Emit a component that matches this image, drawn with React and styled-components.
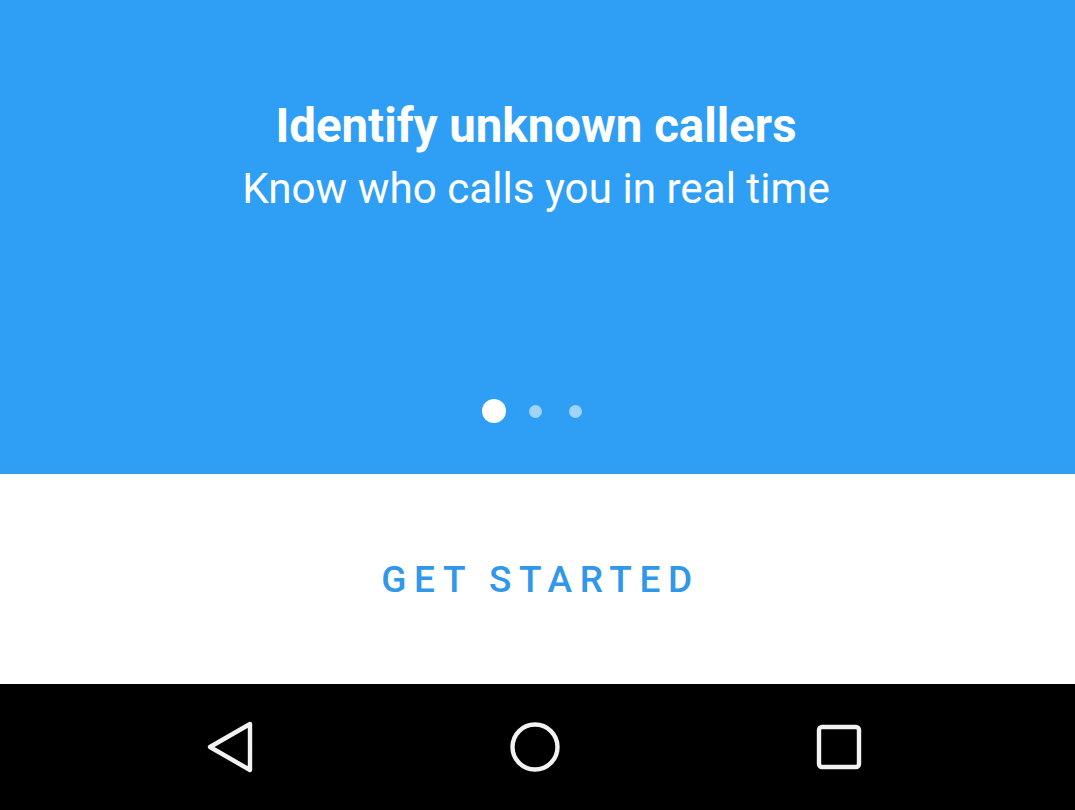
import React from "react";
import styled, { createGlobalStyle } from "styled-components";

const GlobalStyle = createGlobalStyle`
  html, body {
    margin: 0;
    padding: 0;
    background: #000;
  }
  body {
    font-family: Roboto, "Noto Sans", sans-serif;
    -webkit-font-smoothing: antialiased;
  }
`;

const SLIDES = 3;

const App = () => {
  const active = 0;

  return (
    <>
      <GlobalStyle />
      <Screen>
        <Hero>
          <Copy>
            <Title>Identify unknown callers</Title>
            <Subtitle>Know who calls you in real time</Subtitle>
          </Copy>
          <Dots>
            {Array.from({ length: SLIDES }).map((_, i) => (
              <Dot key={i} $active={i === active} />
            ))}
          </Dots>
        </Hero>

        <Footer>
          <StartButton>GET STARTED</StartButton>
        </Footer>

        <NavBar>
          <NavButton aria-label="Back">
            <svg width="52" height="56" viewBox="0 0 52 56">
              <path
                d="M45 5 L5 28 L45 51 Z"
                fill="none"
                stroke="#f2f2f2"
                strokeWidth="4.4"
                strokeLinejoin="round"
              />
            </svg>
          </NavButton>
          <NavButton aria-label="Home">
            <svg width="52" height="52" viewBox="0 0 52 52">
              <circle cx="26" cy="26" r="22.5" fill="none" stroke="#f2f2f2" strokeWidth="4.4" />
            </svg>
          </NavButton>
          <NavButton aria-label="Recents">
            <svg width="48" height="48" viewBox="0 0 48 48">
              <rect x="4" y="4" width="40" height="40" rx="3" fill="none" stroke="#f2f2f2" strokeWidth="4.4" />
            </svg>
          </NavButton>
        </NavBar>
      </Screen>
    </>
  );
};

// ── Styled ──

const Screen = styled.div`
  width: 1075px;
  height: 810px;
  display: flex;
  flex-direction: column;
  overflow: hidden;
`;

const Hero = styled.section`
  height: 474px;
  background: #2f9ff5;
  display: flex;
  flex-direction: column;
  align-items: center;
  box-sizing: border-box;
  padding-top: 98px;
`;

const Copy = styled.div`
  display: flex;
  flex-direction: column;
  align-items: center;
  color: #fff;
  margin-right: 3px;
`;

const Title = styled.h1`
  margin: 0;
  font-size: 47.4px;
  font-weight: 700;
  line-height: 56px;
  letter-spacing: 0;
`;

const Subtitle = styled.p`
  margin: 9px 0 0;
  font-size: 42.2px;
  font-weight: 400;
  line-height: 52px;
`;

const Dots = styled.div`
  margin-top: 184px;
  display: flex;
  align-items: center;
  padding-right: 8px;
`;

const Dot = styled.span`
  width: ${(p) => (p.$active ? "24px" : "13px")};
  height: ${(p) => (p.$active ? "24px" : "13px")};
  margin: 0 ${(p) => (p.$active ? "10px" : "13.5px")};
  border-radius: 50%;
  background: ${(p) => (p.$active ? "#ffffff" : "rgba(255, 255, 255, 0.55)")};
`;

const Footer = styled.section`
  height: 210px;
  background: #fff;
  display: flex;
  align-items: center;
  justify-content: center;
`;

const StartButton = styled.button`
  border: none;
  background: transparent;
  padding: 0;
  margin: 0 0 0 6px;
  font-family: Roboto, "Noto Sans", sans-serif;
  font-size: 37px;
  font-weight: 500;
  letter-spacing: 7.6px;
  color: #3197e9;
  cursor: pointer;
`;

const NavBar = styled.nav`
  flex: 1;
  background: #000;
  display: grid;
  grid-template-columns: repeat(3, 304px);
  justify-content: center;
  align-items: center;
  justify-items: center;
  padding-right: 5px;
`;

const NavButton = styled.button`
  border: none;
  background: transparent;
  padding: 0;
  display: flex;
  align-items: center;
  justify-content: center;
  cursor: pointer;
`;

export default App;
